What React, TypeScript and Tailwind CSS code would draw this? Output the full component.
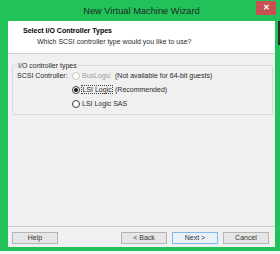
import React from 'react';

const ui = { fontFamily: '"Liberation Sans", Arial, sans-serif' };

function Radio({ checked, disabled }: { checked?: boolean; disabled?: boolean }) {
  return (
    <span
      className={`w-[8px] h-[8px] rounded-full border bg-white flex items-center justify-center shrink-0 ${
        disabled ? 'border-[#c4c4c4] bg-[#f4f4f4]' : 'border-[#3a3a3a]'
      }`}
    >
      {checked && <span className="w-[4px] h-[4px] rounded-full bg-[#111]" />}
    </span>
  );
}

function Btn({ label, focus }: { label: string; focus?: boolean }) {
  return (
    <div
      className={`w-[46px] h-[12px] flex items-center justify-center text-[7px] text-[#333] border whitespace-nowrap ${
        focus ? 'border-[#84b8ec] bg-[#e8f1fa]' : 'border-[#b4b4b4] bg-[#e6e6e6]'
      }`}
    >
      {label}
    </div>
  );
}

export default function App() {
  return (
    <div className="w-[280px] h-[254px] bg-[#f7f7f7] relative overflow-hidden" style={ui}>
      {/* window frame */}
      <div className="w-[280px] h-[251px] bg-[#22c25a] flex flex-col">
        {/* title bar */}
        <div className="h-[21px] flex items-center relative shrink-0 pt-[2px]">
          <div className="flex-1 text-center text-[9.3px] text-[#1c2a1f] pl-[3px] whitespace-nowrap">
            New Virtual Machine Wizard
          </div>
          <div className="absolute left-[256px] top-[1px] w-[20px] h-[14px] bg-[#c75050] flex items-center justify-center text-white text-[8px] font-bold leading-none">
            ✕
          </div>
        </div>

        {/* client area */}
        <div className="flex-1 ml-[8px] mr-[5px] mb-[4px] bg-[#f0f0f0] flex flex-col text-[7px] text-[#2a2a2a] whitespace-nowrap">
          <div className="h-[33px] shrink-0 bg-white border-b border-[#d4d4d4] pl-[15px] pt-[5px] flex flex-col gap-[2px]">
            <div className="font-bold text-black leading-[9px]">Select I/O Controller Types</div>
            <div className="leading-[9px] pl-[14px]">Which SCSI controller type would you like to use?</div>
          </div>

          <div className="pl-[4px] pr-[2px] pt-[11px]">
            <div className="relative border border-[#dadada] rounded-[2px] h-[50px] pt-[3px] pl-[4px]">
              <span className="absolute -top-[5px] left-[4px] px-[1px] bg-[#f0f0f0] leading-[9px]">
                I/O controller types
              </span>
              <div className="flex items-center h-[14px]">
                <span className="w-[55px]">SCSI Controller:</span>
                <Radio disabled />
                <span className="ml-[2px] w-[33px] text-[#a0a0a0]">BusLogic</span>
                <span>(Not available for 64-bit guests)</span>
              </div>
              <div className="flex items-center h-[14px] pl-[55px]">
                <Radio checked />
                <span className="ml-[1px] w-[34px]">
                  <span className="border border-dotted border-[#444] px-[0.5px]">LSI Logic</span>
                </span>
                <span>(Recommended)</span>
              </div>
              <div className="flex items-center h-[14px] pl-[55px]">
                <Radio />
                <span className="ml-[2px]">LSI Logic SAS</span>
              </div>
            </div>
          </div>

          <div className="flex-1" />
          <div className="border-t border-[#c9c9c9] shrink-0 pt-[5px] pb-[3px] flex items-center pl-[4px] pr-[6px]">
            <Btn label="Help" />
            <div className="flex-1" />
            <div className="flex gap-[5px]">
              <Btn label="< Back" />
              <Btn label="Next >" focus />
              <Btn label="Cancel" />
            </div>
          </div>
        </div>
      </div>
      <div className="absolute right-0 top-[21px] w-[2px] h-[24px] bg-[#2a2a2a]" />
    </div>
  );
}
